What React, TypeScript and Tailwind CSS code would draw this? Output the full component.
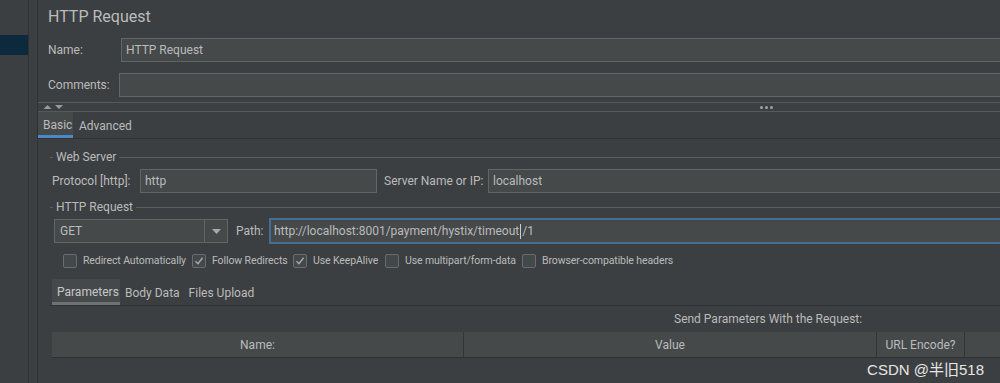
import React from "react";

const font = { fontFamily: 'Roboto, "Noto Sans", "Noto Sans CJK SC", sans-serif' };

function Check({ checked, label, w }: { checked?: boolean; label: string; w: string }) {
  return (
    <div className={`flex shrink-0 items-center gap-[6px] ${w}`}>
      <div className="flex h-[14px] w-[14px] shrink-0 items-center justify-center rounded-[2px] border border-[#6b6b6b] bg-[#43494a]">
        {checked && (
          <svg width="10" height="10" viewBox="0 0 10 10">
            <path d="M1.5 5.2 L4 7.8 L8.6 1.8" fill="none" stroke="#a9a9a9" strokeWidth="1.4" />
          </svg>
        )}
      </div>
      <span className="whitespace-nowrap text-[10.5px] tracking-[-0.1px] text-[#bbbbbb]">{label}</span>
    </div>
  );
}

function Legend({ title }: { title: string }) {
  return (
    <div className="flex h-[14px] shrink-0 items-center">
      <div className="h-px w-[3px] bg-[#5b5e60]" />
      <span className="mx-[3px] whitespace-nowrap text-[12px] leading-none text-[#bbbbbb]">{title}</span>
      <div className="h-px flex-1 bg-[#5b5e60]" />
    </div>
  );
}

export default function App() {
  return (
    <div className="flex h-[383px] w-[1000px] overflow-hidden bg-[#3c3f41] text-[#bbbbbb]" style={font}>
      {/* tree panel */}
      <div className="w-[29px] shrink-0 border-r border-[#2f3133] pt-[35px]">
        <div className="h-[20px] bg-[#0d293e]" />
      </div>
      <div className="w-[9px] shrink-0 border-r border-[#2f3133]" />

      {/* editor */}
      <div className="flex min-w-0 flex-1 flex-col overflow-hidden">
        <div className="h-[38px] shrink-0 whitespace-nowrap pl-[10px] pt-[6px] text-[16px] leading-[22px] text-[#bbbbbb]">HTTP Request</div>

        <div className="flex h-[24px] shrink-0 items-center pl-[10px]">
          <span className="w-[73px] whitespace-nowrap text-[12px]">Name:</span>
          <div className="-mr-[20px] flex h-[24px] flex-1 items-center border border-[#646464] bg-[#45494a] pl-[4px] text-[12px]">
            HTTP Request
          </div>
        </div>

        <div className="mt-[11px] flex h-[24px] shrink-0 items-center pl-[10px]">
          <span className="w-[71px] whitespace-nowrap text-[12px]">Comments:</span>
          <div className="-mr-[20px] h-[24px] flex-1 border border-[#646464] bg-[#45494a]" />
        </div>

        {/* split divider */}
        <div className="mt-[5px] flex h-[10px] shrink-0 items-center border-y border-[#575a5c] pl-[5px]">
          <svg width="20" height="6" viewBox="0 0 20 6">
            <path d="M0.5 5 L4.5 1 L8.5 5 Z" fill="#9a9a9a" />
            <path d="M12 1 L20 1 L16 5 Z" fill="#9a9a9a" />
          </svg>
          <div className="ml-[697px] flex gap-[2px]">
            <div className="h-[3px] w-[3px] rounded-full bg-[#a0a0a0]" />
            <div className="h-[3px] w-[3px] rounded-full bg-[#a0a0a0]" />
            <div className="h-[3px] w-[3px] rounded-full bg-[#a0a0a0]" />
          </div>
        </div>

        {/* tabs */}
        <div className="flex h-[27px] shrink-0 items-end border-b border-[#323232]">
          <div className="flex h-[26px] w-[35px] flex-col bg-[#45494a]">
            <span className="flex-1 whitespace-nowrap pl-[5px] pt-[4px] text-[12px]">Basic</span>
            <div className="h-[3px] bg-[#4a88c7]" />
          </div>
          <span className="ml-[6px] self-start whitespace-nowrap pt-[5px] text-[12px]">Advanced</span>
        </div>

        {/* basic content */}
        <div className="flex shrink-0 flex-col pl-[12px] pt-[11px]">
          <Legend title="Web Server" />
          <div className="mt-[5px] flex h-[24px] items-center">
            <span className="ml-[2px] w-[88px] whitespace-nowrap text-[12px]">Protocol [http]:</span>
            <div className="flex h-[24px] w-[237px] items-center border border-[#646464] bg-[#45494a] pl-[4px] text-[12px]">http</div>
            <span className="ml-[7px] w-[104px] whitespace-nowrap text-[12px]">Server Name or IP:</span>
            <div className="-mr-[20px] flex h-[24px] flex-1 items-center border border-[#646464] bg-[#45494a] pl-[4px] text-[12px]">localhost</div>
          </div>

          <div className="mt-[7px]">
            <Legend title="HTTP Request" />
          </div>
          <div className="mt-[4px] flex h-[26px] items-center">
            <div className="ml-[4px] flex h-[24px] w-[174px] border border-[#646464] bg-[#45494a]">
              <span className="flex flex-1 items-center pl-[5px] text-[12px]">GET</span>
              <div className="flex w-[23px] items-center justify-center border-l border-[#646464]">
                <svg width="9" height="5" viewBox="0 0 9 5">
                  <path d="M0 0 L9 0 L4.5 5 Z" fill="#a9a9a9" />
                </svg>
              </div>
            </div>
            <span className="ml-[8px] w-[33px] whitespace-nowrap text-[12px]">Path:</span>
            <div className="-mr-[20px] flex h-[26px] flex-1 items-center whitespace-nowrap border-2 border-[#466d94] bg-[#45494a] pl-[3px] text-[12px]">
              http://localhost:8001/payment/hystix/timeout
              <span className="mx-px inline-block h-[15px] w-px bg-[#cccccc]" />/1
            </div>
          </div>

          <div className="mt-[9px] flex h-[16px] items-center pl-[13px]">
            <Check label="Redirect Automatically" w="w-[129px]" />
            <Check checked label="Follow Redirects" w="w-[101px]" />
            <Check checked label="Use KeepAlive" w="w-[92px]" />
            <Check label="Use multipart/form-data" w="w-[137px]" />
            <Check label="Browser-compatible headers" w="w-[160px]" />
          </div>

          {/* parameter tabs */}
          <div className="mt-[10px] flex h-[27px] items-end border-b border-[#323232] pl-[2px]">
            <div className="flex h-[26px] w-[68px] flex-col bg-[#45494a]">
              <span className="flex-1 whitespace-nowrap pl-[5px] pt-[4px] text-[12px] text-[#c8c8c8]">Parameters</span>
              <div className="h-[3px] bg-[#6e7275]" />
            </div>
            <span className="ml-[5px] self-start whitespace-nowrap pt-[5px] text-[12px]">Body Data</span>
            <span className="ml-[9px] self-start whitespace-nowrap pt-[5px] text-[12px]">Files Upload</span>
          </div>

          <div className="flex h-[26px] items-center whitespace-nowrap pl-[624px] text-[12px]">Send Parameters With the Request:</div>

          {/* table header */}
          <div className="ml-[2px] flex h-[26px] border-b border-[#2e3133] bg-[#45494a] text-[12px]">
            <div className="flex w-[412px] items-center justify-center border-r border-[#323436]">Name:</div>
            <div className="flex w-[413px] items-center justify-center border-r border-[#323436]">Value</div>
            <div className="flex w-[88px] items-center justify-center whitespace-nowrap border-r border-[#323436]">URL Encode?</div>
            <div className="flex-1" />
          </div>
          <div className="relative h-[30px]">
            <span className="absolute right-[16px] top-[1px] whitespace-nowrap text-[15px] text-[#e6e6e6]" style={{ fontFamily: '"Liberation Sans", "Noto Sans CJK SC", sans-serif' }}>
              CSDN @半旧518
            </span>
          </div>
        </div>
      </div>
    </div>
  );
}
